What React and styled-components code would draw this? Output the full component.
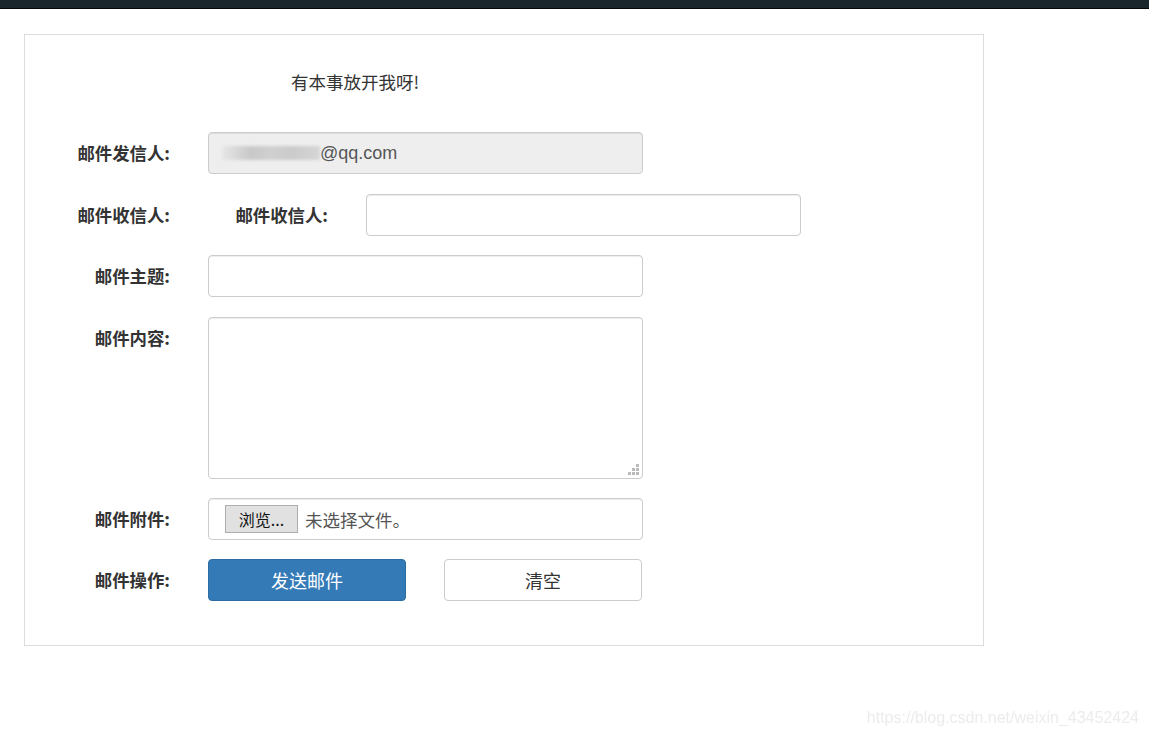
import React from "react";
import styled, { createGlobalStyle } from "styled-components";

const GlobalStyle = createGlobalStyle`
  html, body {
    margin: 0;
    padding: 0;
    background: #fff;
    min-height: 100vh;
  }
  body {
    font-family: "Noto Sans CJK SC", "Liberation Sans", sans-serif;
    color: #333;
  }
`;

const TopBar = styled.div`
  height: 8px;
  background: #1b262c;
  border-bottom: 1px solid #050809;
`;

const Panel = styled.div`
  margin: 25px 0 0 24px;
  width: 960px;
  border: 1px solid #ddd;
  padding: 34px 0 44px;
  box-sizing: border-box;
`;

const Title = styled.div`
  width: 660px;
  text-align: center;
  font-size: 17.5px;
  line-height: 26px;
  color: #333;
  margin-bottom: 37px;
`;

const Form = styled.div`
  display: flex;
  flex-direction: column;
  gap: 19px;
`;

const Row = styled.div`
  display: flex;
  align-items: ${(p) => (p.$top ? "flex-start" : "center")};
  margin-top: ${(p) => (p.$loose ? 1 : 0)}px;
`;

const Label = styled.label`
  width: ${(p) => p.$width || 145}px;
  margin-right: 38px;
  text-align: right;
  font-size: 17.4px;
  font-weight: 700;
  color: #333;
  line-height: 42px;
  flex-shrink: 0;
  white-space: nowrap;
`;

const Input = styled.input`
  width: 435px;
  height: 42px;
  box-sizing: border-box;
  border: 1px solid #ccc;
  border-radius: 4px;
  padding: 0 12px;
  font-size: 18px;
  font-family: "Liberation Sans", "Noto Sans CJK SC", sans-serif;
  color: #555;
  background: #fff;
  box-shadow: inset 0 1px 1px rgba(0, 0, 0, 0.075);
  outline: none;
`;

const FakeValue = styled.div`
  width: 435px;
  height: 42px;
  box-sizing: border-box;
  border: 1px solid #ccc;
  border-radius: 4px;
  padding: 0 13px;
  background: #eee;
  box-shadow: inset 0 1px 1px rgba(0, 0, 0, 0.075);
  display: flex;
  align-items: center;
  font-size: 18px;
  font-family: "Liberation Sans", sans-serif;
  color: #555;
`;

const Blur = styled.span`
  display: inline-block;
  width: 98px;
  height: 14px;
  background: linear-gradient(
    90deg,
    #e6e6e6 0%,
    #d4d4d4 18%,
    #c8c8c8 30%,
    #d0d0d0 50%,
    #cacaca 70%,
    #d6d6d6 100%
  );
  filter: blur(1.5px);
`;

const TextAreaWrap = styled.div`
  position: relative;
  width: 435px;
  height: 162px;
`;

const TextArea = styled.textarea`
  width: 100%;
  height: 100%;
  box-sizing: border-box;
  border: 1px solid #ccc;
  border-radius: 4px;
  box-shadow: inset 0 1px 1px rgba(0, 0, 0, 0.075);
  resize: none;
  outline: none;
  padding: 6px 12px;
  font-size: 16px;
`;

const Grip = styled.svg`
  position: absolute;
  right: 3px;
  bottom: 3px;
`;

const FileBox = styled.div`
  width: 435px;
  height: 42px;
  box-sizing: border-box;
  border: 1px solid #ccc;
  border-radius: 4px;
  box-shadow: inset 0 1px 1px rgba(0, 0, 0, 0.075);
  display: flex;
  align-items: center;
  padding-left: 16px;
  gap: 7px;
`;

const BrowseButton = styled.span`
  display: inline-flex;
  align-items: center;
  justify-content: center;
  width: 73px;
  height: 28px;
  box-sizing: border-box;
  border: 1px solid #adadad;
  background: #e1e1e1;
  font-size: 16px;
  color: #111;
`;

const FileText = styled.span`
  font-size: 17.5px;
  color: #555;
`;

const Buttons = styled.div`
  display: flex;
  gap: 38px;
`;

const Button = styled.button`
  width: 198px;
  height: 42px;
  box-sizing: border-box;
  border-radius: 4px;
  border: 1px solid ${(p) => (p.$primary ? "#2e6da4" : "#ccc")};
  background: ${(p) => (p.$primary ? "#337ab7" : "#fff")};
  color: ${(p) => (p.$primary ? "#fff" : "#333")};
  font-size: 18px;
  font-family: "Noto Sans CJK SC", sans-serif;
  cursor: pointer;
`;

const Watermark = styled.div`
  position: fixed;
  right: 10px;
  bottom: 7px;
  font-family: "Liberation Sans", sans-serif;
  font-size: 16px;
  color: #ececec;
`;

const GripIcon = () => (
  <Grip width="12" height="12" viewBox="0 0 12 12">
    {[
      [8, 0],
      [4, 4],
      [8, 4],
      [0, 8],
      [4, 8],
      [8, 8],
    ].map(([x, y]) => (
      <rect key={`${x}-${y}`} x={x} y={y} width="3" height="3" fill="#bbb" />
    ))}
  </Grip>
);

export default function App() {
  return (
    <>
      <GlobalStyle />
      <TopBar />
      <Panel>
        <Title>有本事放开我呀!</Title>
        <Form>
          <Row>
            <Label>邮件发信人:</Label>
            <FakeValue>
              <Blur />
              @qq.com
            </FakeValue>
          </Row>
          <Row $loose>
            <Label>邮件收信人:</Label>
            <Label $width={120}>邮件收信人:</Label>
            <Input type="text" />
          </Row>
          <Row>
            <Label>邮件主题:</Label>
            <Input type="text" />
          </Row>
          <Row $top $loose>
            <Label>邮件内容:</Label>
            <TextAreaWrap>
              <TextArea />
              <GripIcon />
            </TextAreaWrap>
          </Row>
          <Row>
            <Label>邮件附件:</Label>
            <FileBox>
              <BrowseButton>浏览...</BrowseButton>
              <FileText>未选择文件。</FileText>
            </FileBox>
          </Row>
          <Row>
            <Label>邮件操作:</Label>
            <Buttons>
              <Button $primary>发送邮件</Button>
              <Button>清空</Button>
            </Buttons>
          </Row>
        </Form>
      </Panel>
      <Watermark>https://blog.csdn.net/weixin_43452424</Watermark>
    </>
  );
}
